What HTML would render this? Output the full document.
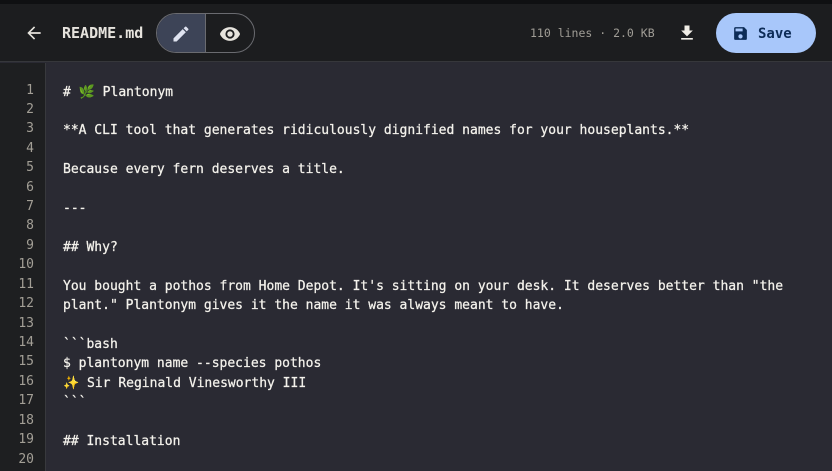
<!DOCTYPE html>
<html><head><meta charset="utf-8"><style>
*{margin:0;padding:0;box-sizing:border-box}
body{width:832px;height:471px;overflow:hidden;background:#2a2a33;font-family:"DejaVu Sans Mono","Liberation Mono",monospace}
.top{position:absolute;left:0;top:0;width:832px;height:4px;background:#0f1012}
.hdr{position:absolute;left:0;top:4px;width:832px;height:58px;background:#1c1d1f;border-bottom:1px solid #36373b}
.title{position:absolute;left:62px;top:20px;color:#e6e3dd;font-size:15px;font-weight:bold}
.tog{position:absolute;left:156px;top:9px;width:99px;height:40px;border:1px solid #6a6b70;border-radius:20px;overflow:hidden}
.tog .a{position:absolute;left:0;top:0;width:49px;height:40px;background:#3d4457;border-right:1px solid #6a6b70}
.meta{position:absolute;left:530px;top:22px;color:#a09d96;font-size:11.5px}
.save{position:absolute;left:716px;top:9px;width:100px;height:40px;border-radius:20px;background:#a8c7fa;color:#0d2c57;font-size:14px;font-weight:bold}
.gut{position:absolute;left:0;top:63px;width:46px;height:408px;background:#1e1f21;border-right:1px solid #38393d}
.ln{position:absolute;top:80.5px;line-height:19.42px;white-space:pre}
.nums{left:0;width:34px;text-align:right;color:#a39f96;font-size:13px}
.code{left:63px;color:#f4f2ec;font-size:13px;-webkit-text-stroke:0.25px #f4f2ec}
</style></head><body>
<div class="top"></div>
<div class="hdr">
<svg style="position:absolute;left:24px;top:19px" width="20" height="20" viewBox="0 0 24 24"><path d="M20 11H7.8l5.6-5.6L12 4l-8 8 8 8 1.4-1.4L7.8 13H20z" fill="#e6e3dd"/></svg>
<div class="title">README.md</div>
<div class="tog"><div class="a"></div>
<svg style="position:absolute;left:14px;top:10px" width="20" height="20" viewBox="0 0 24 24"><path d="M3 17.25V21h3.75L17.8 9.94l-3.75-3.75zM20.7 7.04a1 1 0 0 0 0-1.41l-2.34-2.34a1 1 0 0 0-1.41 0l-1.830 1.83 3.75 3.75z" fill="#dfe3f0"/></svg>
<svg style="position:absolute;left:62px;top:9px" width="22" height="22" viewBox="0 0 24 24"><path d="M12 4.5C7 4.5 2.7 7.6 1 12c1.7 4.4 6 7.5 11 7.5s9.3-3.1 11-7.5c-1.7-4.4-6-7.5-11-7.5zM12 17a5 5 0 1 1 0-10 5 5 0 0 1 0 10zm0-8a3 3 0 1 0 0 6 3 3 0 0 0 0-6z" fill="#e6e3dd"/></svg>
</div>
<div class="meta">110 lines · 2.0 KB</div>
<svg style="position:absolute;left:677px;top:19px" width="20" height="20" viewBox="0 0 24 24"><path d="M19 9h-4V3H9v6H5l7 7zM5 18v2h14v-2z" fill="#f0ede6"/></svg>
<div class="save">
<svg style="position:absolute;left:16px;top:12px" width="17" height="17" viewBox="0 0 24 24"><path d="M17 3H5a2 2 0 0 0-2 2v14a2 2 0 0 0 2 2h14a2 2 0 0 0 2-2V7zm-5 16a3 3 0 1 1 0-6 3 3 0 0 1 0 6zm3-10H5V5h10z" fill="#0d2c57"/></svg>
<span style="position:absolute;left:42px;top:13px">Save</span></div>
</div>
<div class="gut"></div>
<div class="ln nums">1
2
3
4
5
6
7
8
9
10
11
12
13
14
15
16
17
18
19
20</div>
<div class="ln code"># <span style="font-family:'Noto Sans CJK JP',sans-serif;color:#6cbf3c">🌿</span> Plantonym

**A CLI tool that generates ridiculously dignified names for your houseplants.**

Because every fern deserves a title.

---

## Why?

You bought a pothos from Home Depot. It's sitting on your desk. It deserves better than "the
plant." Plantonym gives it the name it was always meant to have.

&#96;&#96;&#96;bash
$ plantonym name --species pothos
<span style="color:#f5c842">✨</span> Sir Reginald Vinesworthy III
&#96;&#96;&#96;

## Installation
</div>
</body></html>
